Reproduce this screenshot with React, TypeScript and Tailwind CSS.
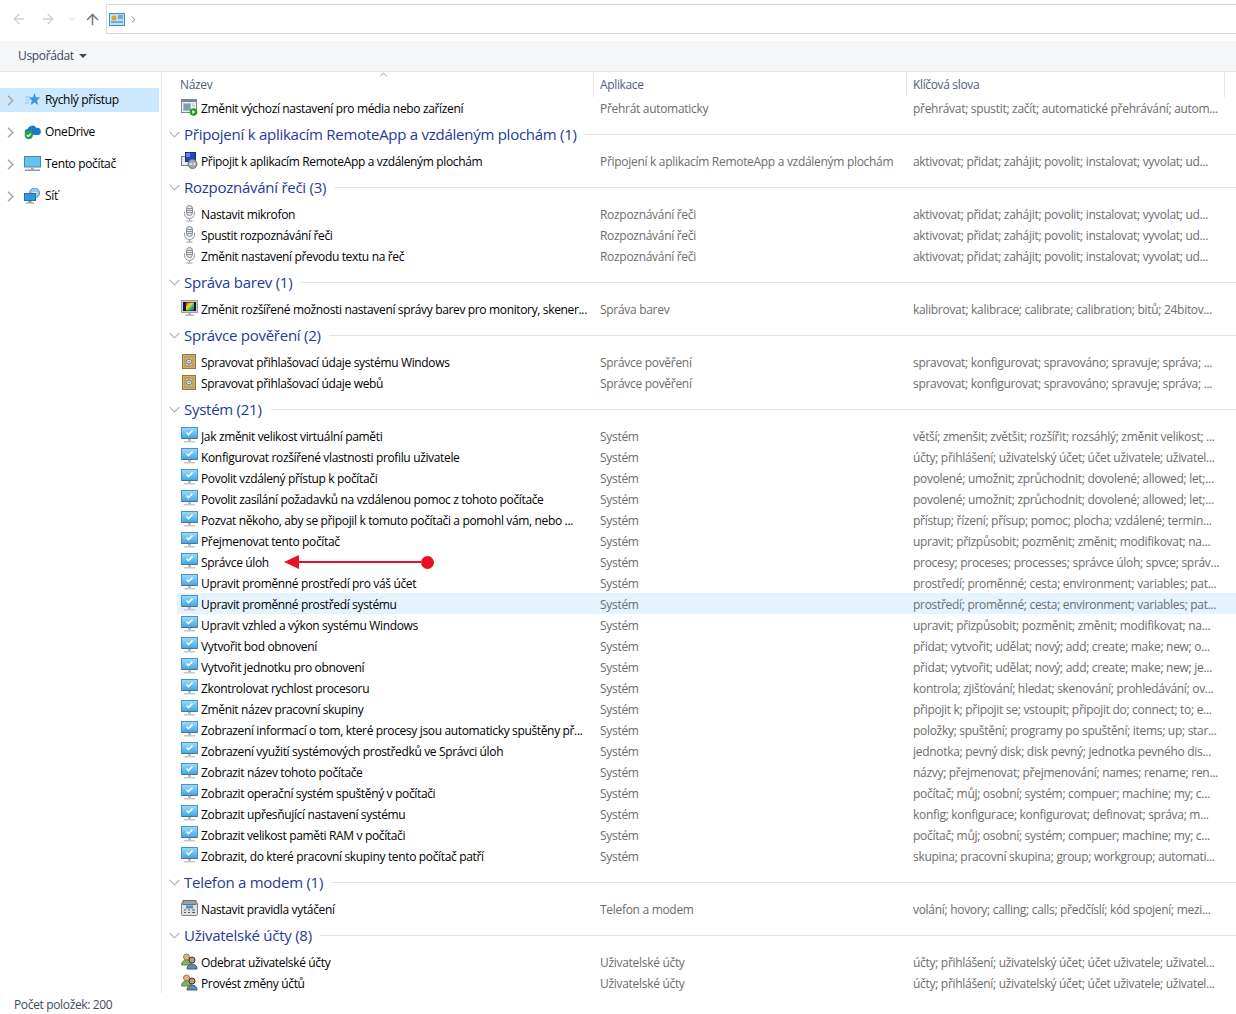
import React from 'react';
import { ArrowLeft, ArrowRight, ArrowUp, ChevronDown, ChevronRight, ChevronUp } from 'lucide-react';

type Row = { icon: React.FC; name: string; app: string; keys: string; selected?: boolean; arrow?: boolean };

const AutoplayIcon = () => (
  <svg width="17" height="17" viewBox="0 0 17 17">
    <rect x="0.5" y="0.5" width="15" height="13" fill="#eef2f5" stroke="#7d8990" />
    <rect x="1" y="1" width="14" height="2" fill="#6f8797" />
    <rect x="2.5" y="4.5" width="7" height="7" fill="#7d9fb3" stroke="#a9bcc8" />
    <path d="M11 5h3M11 7h3" stroke="#b7c3cb" />
    <circle cx="12.5" cy="13" r="3.8" fill="#2c9a22" />
    <path d="M11.3 11v4l3-2z" fill="#fff" />
  </svg>
);

const RemoteIcon = () => (
  <svg width="17" height="17" viewBox="0 0 17 17">
    <rect x="0.5" y="4.5" width="10" height="9" fill="#e4e9ee" stroke="#76808a" />
    <rect x="4.5" y="0.5" width="10" height="9" fill="#1f48b8" stroke="#1b2f70" />
    <rect x="5" y="1" width="4" height="4" fill="#5f86e0" />
    <circle cx="11.5" cy="12" r="4.5" fill="#a3abb0" stroke="#6b7378" />
    <path d="M9 12h2.2M9.8 11l-1 1 1 1M14 12h-2M13.2 11l1 1-1 1" fill="none" stroke="#fff" strokeWidth="0.8" />
  </svg>
);

const MicIcon = () => (
  <svg width="17" height="17" viewBox="0 0 17 17">
    <rect x="5.5" y="0.5" width="6" height="10" rx="3" fill="#e4e7ea" stroke="#7f878d" />
    <path d="M6 3.5h5M6 5.5h5M6 7.5h5" stroke="#8c949a" />
    <path d="M3.5 6.5v2a5 5 0 0 0 10 0v-2M8.5 13.5v2M5.5 16h6" fill="none" stroke="#8f979d" />
  </svg>
);

const ColorIcon = () => (
  <svg width="17" height="17" viewBox="0 0 17 17">
    <defs>
      <linearGradient id="rainbow" x1="0" x2="1" y1="0" y2="1">
        <stop offset="0" stopColor="#e02424" />
        <stop offset="0.4" stopColor="#ece22a" />
        <stop offset="0.65" stopColor="#28c060" />
        <stop offset="1" stopColor="#7a28e0" />
      </linearGradient>
    </defs>
    <rect x="0.5" y="0.5" width="16" height="12" fill="#c9cdd0" stroke="#9aa0a4" />
    <rect x="2" y="2" width="13" height="9" fill="#12162e" />
    <rect x="5" y="2.5" width="8" height="8" fill="url(#rainbow)" />
    <path d="M7 13h3v1.5H7zM4 14.5h9V16H4z" fill="#b4b9bd" />
  </svg>
);

const SafeIcon = () => (
  <svg width="17" height="17" viewBox="0 0 17 17">
    <rect x="1.5" y="1.5" width="13" height="14" fill="#d2ad62" stroke="#9a7a38" />
    <rect x="4" y="4" width="8" height="9" fill="#c8bfa6" stroke="#ab9055" />
    <circle cx="8" cy="8.5" r="2.5" fill="#e8e4d8" stroke="#7c7665" />
    <circle cx="8" cy="8.5" r="0.8" fill="#7c7665" />
  </svg>
);

const SystemIcon = () => (
  <svg width="17" height="17" viewBox="0 0 17 17">
    <defs>
      <linearGradient id="screen" x1="0" x2="0" y1="0" y2="1">
        <stop offset="0" stopColor="#9fdcf8" />
        <stop offset="1" stopColor="#3aa6e8" />
      </linearGradient>
    </defs>
    <rect x="0.5" y="0.5" width="16" height="11" fill="url(#screen)" stroke="#4b93c4" />
    <path d="M1 11.5h15" stroke="#5e6e7a" />
    <path d="M5.5 5.5l2 2 4-4" fill="none" stroke="#fff" strokeWidth="1.6" />
    <path d="M7 12h3v2H7z" fill="#b4bcc2" />
    <path d="M3 14h11v1.5H3z" fill="#c2c9ce" />
  </svg>
);

const PhoneIcon = () => (
  <svg width="17" height="17" viewBox="0 0 17 17">
    <rect x="0.5" y="2.5" width="16" height="13" rx="1" fill="#dde1e4" stroke="#7b8389" />
    <rect x="2" y="0.5" width="13" height="4" fill="#98a1a7" stroke="#697176" />
    <rect x="5" y="5.5" width="7" height="3" fill="#4a90cc" />
    <path d="M3 10h2M7 10h2M11 10h3M3 12.5h2M7 12.5h2M11 12.5h3" stroke="#565e63" />
  </svg>
);

const UsersIcon = () => (
  <svg width="17" height="17" viewBox="0 0 17 17">
    <circle cx="5.5" cy="4" r="3" fill="#dcb48c" stroke="#9a7a52" />
    <path d="M0.5 12c0-3 2-5 5-5s5 2 5 5z" fill="#86ad5c" stroke="#688a45" />
    <circle cx="11" cy="7" r="3" fill="#c29772" stroke="#3f352c" />
    <path d="M6 16c0-3 2-5 5-5s5 2 5 5z" fill="#5f8bb0" stroke="#3d5f7c" />
  </svg>
);

const StarIcon = () => (
  <svg width="17" height="16" viewBox="0 0 17 16">
    <path d="M10.5 1l1.5 4.2 4.5.2-3.5 2.9 1.2 4.7-3.7-2.6-3.8 2.6 1.2-4.7-3.4-2.9 4.5-.2z" fill="#3a96e6" />
    <path d="M1 5h5M2 8h4M1 11h4" stroke="#8cc6f0" />
  </svg>
);

const CloudIcon = () => (
  <svg width="17" height="16" viewBox="0 0 17 16">
    <path d="M4 11a3 3 0 0 1-.5-6A5 5 0 0 1 12.5 4a3.5 3.5 0 0 1 1.5 7z" fill="#1e78c8" />
    <circle cx="4.8" cy="11" r="4.2" fill="#2aa13f" />
    <path d="M2.8 11l1.5 1.5 2.6-2.8" fill="none" stroke="#fff" strokeWidth="1.2" />
  </svg>
);

const PcIcon = () => (
  <svg width="17" height="16" viewBox="0 0 17 16">
    <rect x="0.5" y="0.5" width="16" height="10.5" fill="#62c3f2" stroke="#4f86a6" />
    <path d="M7 11.5h3v2H7z" fill="#a6aeb4" />
    <path d="M1 13.5h15V15H1z" fill="#8d959b" />
  </svg>
);

const NetIcon = () => (
  <svg width="17" height="16" viewBox="0 0 17 16">
    <circle cx="10.5" cy="5" r="5" fill="#9cc8e4" stroke="#5f94ba" />
    <path d="M7 6c2-2 5-2 7-1" fill="none" stroke="#e6f2fa" />
    <rect x="0.5" y="5.5" width="11" height="7" fill="#2f9ae0" stroke="#2a6f9f" />
    <path d="M4.5 13h3v1.5h-3zM2 14.5h8v1H2z" fill="#8d959b" />
  </svg>
);

const HEAD_CLS = 'h-[25px] flex items-center pl-[6px] text-[12px] text-[#4c607a] border-r border-[#e5e5e5]';

function FolderRow({ icon: Icon, label, active }: { icon: React.FC; label: string; active?: boolean }) {
  return (
    <div className={`flex items-center h-6 w-[159px] pl-[7px] text-[12px] text-black ${active ? 'bg-[#cce8ff]' : ''}`}>
      <svg width="7" height="11" viewBox="0 0 7 11" className="mr-[10px] shrink-0">
        <path d="M1 0.8L5.7 5.5L1 10.2" fill="none" stroke="#a6a6a6" strokeWidth="1.5" />
      </svg>
      <div className="w-[17px] flex justify-center mr-[4px] shrink-0">
        <Icon />
      </div>
      <span>{label}</span>
    </div>
  );
}

function ItemRow({ row }: { row: Row }) {
  const Icon = row.icon;
  return (
    <div className={`relative flex items-center h-[21px] ml-[15px] pl-[4px] text-[12px] ${row.selected ? 'bg-[#e5f3ff]' : ''}`}>
      <div className="w-[17px] h-[17px] shrink-0 mr-[3px]">
        <Icon />
      </div>
      <div className="w-[399px] pr-2 pt-[2px] truncate text-black shrink-0">{row.name}</div>
      <div className="w-[313px] pt-[2px] truncate text-[#6d6d6d] tracking-[-0.3px] shrink-0">{row.app}</div>
      <div className="w-[310px] pt-[2px] truncate text-[#6d6d6d] tracking-[-0.3px] shrink-0">{row.keys}</div>
      {row.arrow && (
        <div className="absolute left-[107px] top-[4px] flex items-center w-[150px] h-[14px]">
          <div className="w-0 h-0 border-y-[7px] border-y-transparent border-r-[15px] border-r-[#e81123]" />
          <div className="flex-1 h-[2px] bg-[#e81123]" />
          <div className="w-[13px] h-[13px] rounded-full bg-[#e81123]" />
        </div>
      )}
    </div>
  );
}

function Group({ title, rows }: { title: string; rows: Row[] }) {
  return (
    <div>
      <div className="flex items-center h-8 pl-[7px]">
        <svg width="11" height="7" viewBox="0 0 11 7" className="mr-[4px] shrink-0">
          <path d="M0.6 1L5.5 5.9L10.4 1" fill="none" stroke="#8a8a8a" />
        </svg>
        <span className="text-[15px] tracking-[-0.26px] text-[#1e3a9a] whitespace-nowrap">{title}</span>
        <div className="flex-1 h-px bg-[#e5e5e5] ml-[8px]" />
      </div>
      {rows.map((row) => (
        <ItemRow key={row.name} row={row} />
      ))}
    </div>
  );
}

const sys = (name: string, keys: string, extra: Partial<Row> = {}): Row => ({ icon: SystemIcon, name, app: 'Systém', keys, ...extra });
const ACTIVATE = 'aktivovat; přidat; zahájit; povolit; instalovat; vyvolat; ud...';
const SPRAVOVAT = 'spravovat; konfigurovat; spravováno; spravuje; správa; ...';
const ACCOUNTS = 'účty; přihlášení; uživatelský účet; účet uživatele; uživatel...';

const groups: { title: string; rows: Row[] }[] = [
  {
    title: 'Připojení k aplikacím RemoteApp a vzdáleným plochám (1)',
    rows: [{ icon: RemoteIcon, name: 'Připojit k aplikacím RemoteApp a vzdáleným plochám', app: 'Připojení k aplikacím RemoteApp a vzdáleným plochám', keys: ACTIVATE }],
  },
  {
    title: 'Rozpoznávání řeči (3)',
    rows: [
      { icon: MicIcon, name: 'Nastavit mikrofon', app: 'Rozpoznávání řeči', keys: ACTIVATE },
      { icon: MicIcon, name: 'Spustit rozpoznávání řeči', app: 'Rozpoznávání řeči', keys: ACTIVATE },
      { icon: MicIcon, name: 'Změnit nastavení převodu textu na řeč', app: 'Rozpoznávání řeči', keys: ACTIVATE },
    ],
  },
  {
    title: 'Správa barev (1)',
    rows: [{ icon: ColorIcon, name: 'Změnit rozšířené možnosti nastavení správy barev pro monitory, skener...', app: 'Správa barev', keys: 'kalibrovat; kalibrace; calibrate; calibration; bitů; 24bitov...' }],
  },
  {
    title: 'Správce pověření (2)',
    rows: [
      { icon: SafeIcon, name: 'Spravovat přihlašovací údaje systému Windows', app: 'Správce pověření', keys: SPRAVOVAT },
      { icon: SafeIcon, name: 'Spravovat přihlašovací údaje webů', app: 'Správce pověření', keys: SPRAVOVAT },
    ],
  },
  {
    title: 'Systém (21)',
    rows: [
      sys('Jak změnit velikost virtuální paměti', 'větší; zmenšit; zvětšit; rozšířit; rozsáhlý; změnit velikost; ...'),
      sys('Konfigurovat rozšířené vlastnosti profilu uživatele', 'účty; přihlášení; uživatelský účet; účet uživatele; uživatel...'),
      sys('Povolit vzdálený přístup k počítači', 'povolené; umožnit; zprůchodnit; dovolené; allowed; let;...'),
      sys('Povolit zasílání požadavků na vzdálenou pomoc z tohoto počítače', 'povolené; umožnit; zprůchodnit; dovolené; allowed; let;...'),
      sys('Pozvat někoho, aby se připojil k tomuto počítači a pomohl vám, nebo ...', 'přístup; řízení; přísup; pomoc; plocha; vzdálené; termin...'),
      sys('Přejmenovat tento počítač', 'upravit; přizpůsobit; pozměnit; změnit; modifikovat; na...'),
      sys('Správce úloh', 'procesy; proceses; processes; správce úloh; spvce; správ...', { arrow: true }),
      sys('Upravit proměnné prostředí pro váš účet', 'prostředí; proměnné; cesta; environment; variables; pat...'),
      sys('Upravit proměnné prostředí systému', 'prostředí; proměnné; cesta; environment; variables; pat...', { selected: true }),
      sys('Upravit vzhled a výkon systému Windows', 'upravit; přizpůsobit; pozměnit; změnit; modifikovat; na...'),
      sys('Vytvořit bod obnovení', 'přidat; vytvořit; udělat; nový; add; create; make; new; o...'),
      sys('Vytvořit jednotku pro obnovení', 'přidat; vytvořit; udělat; nový; add; create; make; new; je...'),
      sys('Zkontrolovat rychlost procesoru', 'kontrola; zjišťování; hledat; skenování; prohledávání; ov...'),
      sys('Změnit název pracovní skupiny', 'připojit k; připojit se; vstoupit; připojit do; connect; to; e...'),
      sys('Zobrazení informací o tom, které procesy jsou automaticky spuštěny př...', 'položky; spuštění; programy po spuštění; items; up; star...'),
      sys('Zobrazení využití systémových prostředků ve Správci úloh', 'jednotka; pevný disk; disk pevný; jednotka pevného dis...'),
      sys('Zobrazit název tohoto počítače', 'názvy; přejmenovat; přejmenování; names; rename; ren...'),
      sys('Zobrazit operační systém spuštěný v počítači', 'počítač; můj; osobní; systém; compuer; machine; my; c...'),
      sys('Zobrazit upřesňující nastavení systému', 'konfig; konfigurace; konfigurovat; definovat; správa; m...'),
      sys('Zobrazit velikost paměti RAM v počítači', 'počítač; můj; osobní; systém; compuer; machine; my; c...'),
      sys('Zobrazit, do které pracovní skupiny tento počítač patří', 'skupina; pracovní skupina; group; workgroup; automati...'),
    ],
  },
  {
    title: 'Telefon a modem (1)',
    rows: [{ icon: PhoneIcon, name: 'Nastavit pravidla vytáčení', app: 'Telefon a modem', keys: 'volání; hovory; calling; calls; předčíslí; kód spojení; mezi...' }],
  },
  {
    title: 'Uživatelské účty (8)',
    rows: [
      { icon: UsersIcon, name: 'Odebrat uživatelské účty', app: 'Uživatelské účty', keys: ACCOUNTS },
      { icon: UsersIcon, name: 'Provést změny účtů', app: 'Uživatelské účty', keys: ACCOUNTS },
    ],
  },
];

export default function App() {
  return (
    <div className="w-[1236px] h-[1014px] overflow-hidden bg-white flex flex-col font-['Open_Sans',sans-serif] tracking-[-0.35px]">
      {/* address bar */}
      <div className="h-[41px] shrink-0 flex items-center pb-[3px]">
        <ArrowLeft size={16} className="ml-[11px] text-[#d0d0d0]" />
        <ArrowRight size={16} className="ml-[13px] text-[#d0d0d0]" />
        <ChevronDown size={10} className="ml-[11px] text-[#d0d0d0]" />
        <ArrowUp size={17} strokeWidth={2.25} className="ml-[7px] text-[#7a7a7a]" />
        <div className="ml-[5px] flex-1 h-[30px] border border-[#d9d9d9] border-r-0 flex items-center pl-[2px]">
          <svg width="16" height="13" viewBox="0 0 16 13">
            <rect x="0.5" y="0.5" width="15" height="12" fill="#b9e2f8" stroke="#3f8fc8" />
            <circle cx="5" cy="5" r="2.5" fill="#e8a020" />
            <path d="M9 3h5M9 5h5M2 9h12" stroke="#2f6fa8" />
          </svg>
          <ChevronRight size={11} strokeWidth={2} className="ml-[3px] text-[#6d6d6d]" />
        </div>
      </div>

      {/* toolbar */}
      <div className="h-[31px] shrink-0 bg-[#f5f6f7] border-b border-[#e5e5e5] flex items-center pl-[18px] text-[12px] text-[#3a4a5e]">
        <span>Uspořádat</span>
        <div className="ml-[5px] w-0 h-0 border-x-[4px] border-x-transparent border-t-[4px] border-t-[#3a4a5e]" />
      </div>

      <div className="flex-1 flex min-h-0">
        {/* tree */}
        <div className="w-[162px] shrink-0 border-r border-[#e5e5e5] pt-4 flex flex-col gap-2">
          <FolderRow icon={StarIcon} label="Rychlý přístup" active />
          <FolderRow icon={CloudIcon} label="OneDrive" />
          <FolderRow icon={PcIcon} label="Tento počítač" />
          <FolderRow icon={NetIcon} label="Síť" />
        </div>

        {/* results list */}
        <div className="relative flex-1 min-w-0 overflow-hidden">
          <ChevronUp size={11} strokeWidth={1.25} className="absolute left-[216px] top-[-3px] text-[#555555]" />
          <div className="flex h-[25px] ml-[8px] w-[1055px]">
            <div className={`${HEAD_CLS} w-[424px] pl-[10px]`}>Název</div>
            <div className={`${HEAD_CLS} w-[313px]`}>Aplikace</div>
            <div className={`${HEAD_CLS} w-[318px]`}>Klíčová slova</div>
          </div>
          <ItemRow row={{ icon: AutoplayIcon, name: 'Změnit výchozí nastavení pro média nebo zařízení', app: 'Přehrát automaticky', keys: 'přehrávat; spustit; začít; automatické přehrávání; autom...' }} />
          {groups.map((g) => (
            <Group key={g.title} title={g.title} rows={g.rows} />
          ))}
        </div>
      </div>

      {/* status bar */}
      <div className="h-[21px] shrink-0 flex items-center pl-[14px] pt-[2px] text-[12px] text-[#3f4a5a]">Počet položek: 200</div>
    </div>
  );
}
